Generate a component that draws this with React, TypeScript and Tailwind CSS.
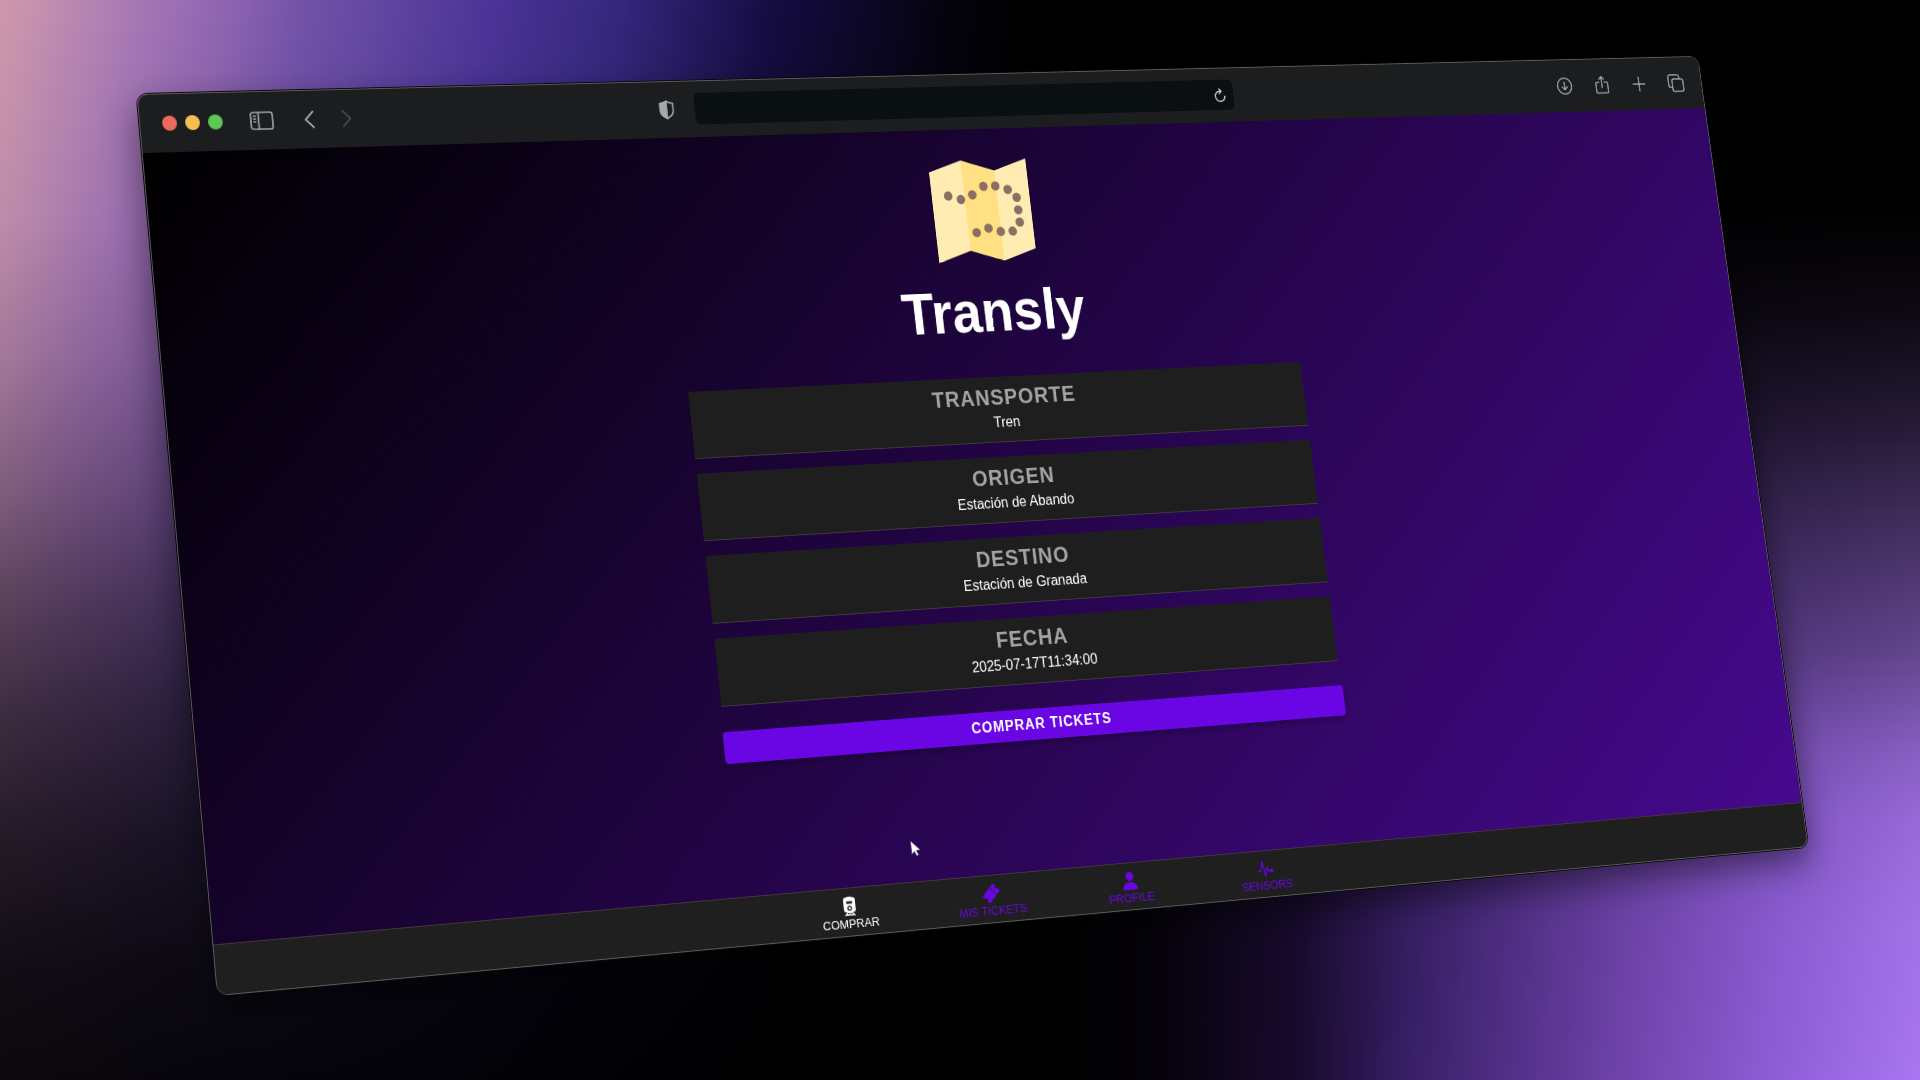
import type { ReactNode } from "react";
import { IoPerson, IoPulse, IoTicket, IoTrain } from "react-icons/io5";

const mapDots: [number, number][] = [
  [10.7, 18.2],
  [15.7, 19.7],
  [20.6, 18.1],
  [25.5, 15],
  [30.4, 15],
  [35.3, 16.5],
  [38.6, 19.6],
  [38.7, 24.3],
  [38.7, 28.9],
  [35.4, 32.2],
  [30.5, 32.2],
  [25.6, 30.8],
  [20.6, 32.3],
];

function MapLogo() {
  return (
    <svg viewBox="0 0 48 48" className="size-36" role="img" aria-label="Transly">
      <path d="M4 9.2 17.33 5v34L4 43.2zM30.67 9.2 44 5v34l-13.33 4.2z" fill="#ffecb3" />
      <path d="M17.33 5l13.34 4.2v34L17.33 39z" fill="#ffe082" />
      {mapDots.map(([x, y]) => (
        <circle key={`${x}-${y}`} cx={x} cy={y} r="1.75" fill="#8d6e63" />
      ))}
    </svg>
  );
}

function ToolIcon({ label, dim, children }: { label: string; dim?: boolean; children: ReactNode }) {
  return (
    <button type="button" aria-label={label} className={dim ? "text-[#46484b]" : "text-[#a5a7aa]"}>
      <svg
        viewBox="0 0 22 22"
        className="size-[22px]"
        fill="none"
        stroke="currentColor"
        strokeWidth="1.6"
        strokeLinecap="round"
        strokeLinejoin="round"
      >
        {children}
      </svg>
    </button>
  );
}

function Toolbar() {
  return (
    <header className="grid h-[62px] grid-cols-[1fr_auto_1fr] items-center bg-[#1b1d1f] px-6 pb-px">
      <div className="flex items-center">
        <div className="flex gap-[9px]">
          <button type="button" aria-label="Close" className="size-4 rounded-full bg-[#ee6a5f]" />
          <button type="button" aria-label="Minimize" className="size-4 rounded-full bg-[#f5bf4f]" />
          <button type="button" aria-label="Maximize" className="size-4 rounded-full bg-[#5fc653]" />
        </div>
        <button type="button" aria-label="Sidebar" className="ml-[30px] text-[#a5a7aa]">
          <svg viewBox="0 0 26 20" className="h-5 w-[26px]" fill="none" stroke="currentColor" strokeWidth="1.7" strokeLinecap="round">
            <rect x="1" y="1" width="24" height="18" rx="2.5" />
            <path d="M9.5 1v18" />
            <path d="M4 5h2.4M4 8h2.4M4 11h2.4" strokeWidth="1.3" />
          </svg>
        </button>
        <div className="ml-[29px] flex gap-[19px]">
          <ToolIcon label="Back">
            <path d="M15 2.5 6.5 11l8.5 8.5" strokeWidth="1.8" />
          </ToolIcon>
          <ToolIcon label="Forward" dim>
            <path d="M7 2.5l8.5 8.5L7 19.5" strokeWidth="1.8" />
          </ToolIcon>
        </div>
      </div>
      <div className="flex w-[664px] items-center">
        <button type="button" aria-label="Privacy report" className="-ml-[43px] text-[#a5a7aa]">
          <svg viewBox="0 0 20 22" className="h-[22px] w-5" fill="none" stroke="currentColor" strokeWidth="1.7">
            <path d="M10 1.5c2.5 1.5 5 2 7.500 2.300V12c0 4-3 6.500-7.500 8.500C5.500 18.500 2.500 16 2.500 12V3.800C5 3.500 7.500 3 10 1.500z" />
            <path d="M10 1.500C7.500 3 5 3.500 2.500 3.800V12c0 4 3 6.500 7.500 8.500z" fill="currentColor" />
          </svg>
        </button>
        <div className="ml-[23px] flex h-[35px] w-full shrink-0 items-center rounded-md bg-[#0a0f11] pr-2">
          <input aria-label="Address" className="h-full min-w-0 flex-1 bg-transparent px-3 text-sm text-gray-200 outline-none" />
          <button type="button" aria-label="Reload" className="text-[#d8dadb]">
            <svg viewBox="0 0 18 18" className="size-[18px]" fill="none" stroke="currentColor" strokeWidth="1.5" strokeLinecap="round" strokeLinejoin="round">
              <path d="M10.5 4.300H9a6 6 0 1 0 6 6" />
              <path d="M8.300 1.700 11 4.300 8.300 7" />
            </svg>
          </button>
        </div>
      </div>
      <div className="flex justify-end gap-[29px]">
        <ToolIcon label="Downloads">
          <circle cx="11" cy="11" r="9.5" />
          <path d="M11 6.500v9M7.500 12l3.500 3.500 3.500-3.500" />
        </ToolIcon>
        <ToolIcon label="Share">
          <path d="M7.500 7.500H4.500a1.500 1.500 0 0 0-1.500 1.500v10a1.500 1.500 0 0 0 1.500 1.500h13a1.500 1.500 0 0 0 1.500-1.500V9a1.500 1.500 0 0 0-1.500-1.500h-3M11 14V1M7.800 4 11 .9 14.200 4" />
        </ToolIcon>
        <ToolIcon label="New tab">
          <path d="M11 3v16M3 11h16" />
        </ToolIcon>
        <ToolIcon label="Tab overview">
          <rect x="6" y="6" width="15" height="15" rx="2.5" />
          <path d="M6 16H3.500A2.500 2.500 0 0 1 1 13.500v-10A2.500 2.500 0 0 1 3.500 1h10A2.500 2.500 0 0 1 16 3.500V6" />
        </ToolIcon>
      </div>
    </header>
  );
}

const trip = [
  { label: "TRANSPORTE", value: "Tren" },
  { label: "ORIGEN", value: "Estación de Abando" },
  { label: "DESTINO", value: "Estación de Granada" },
  { label: "FECHA", value: "2025-07-17T11:34:00" },
];

const tabs = [
  { label: "COMPRAR", icon: IoTrain, active: true },
  { label: "MIS TICKETS", icon: IoTicket, active: false },
  { label: "PROFILE", icon: IoPerson, active: false },
  { label: "SENSORS", icon: IoPulse, active: false },
];

function Page() {
  return (
    <main className="relative flex flex-col items-center bg-[linear-gradient(135deg,#000_0%,#46098e_100%)] px-6 pt-5 pb-[141px]">
      <MapLogo />
      <h1 className="mt-1.5 text-[64px] leading-[72px] font-bold text-white">Transly</h1>
      <div className="mt-[37px] w-full max-w-[754px]">
        <dl className="flex flex-col gap-4 px-[2px] text-center">
          {trip.map((item) => (
            <div key={item.label} className="border-b border-[#43383f] bg-[#1e1e1e] py-2">
              <dt className="text-2xl leading-[30px] font-bold tracking-[1px] text-[#a3a3a3]">{item.label}</dt>
              <dd className="text-base leading-[26px] text-white">{item.value}</dd>
            </div>
          ))}
        </dl>
        <button
          type="button"
          className="mt-[27px] block h-[34px] w-full rounded bg-[#6a06e4] text-base font-bold tracking-[1px] text-white shadow-md shadow-black/20"
        >
          COMPRAR TICKETS
        </button>
      </div>
      <svg viewBox="0 0 12 18" className="absolute top-[777px] left-[41%] h-[18px] w-3" aria-hidden="true">
        <path d="M.5.5v14.500l3.300-3 2.200 5 2.500-1.100-2.200-4.900h4.700z" fill="#fff" stroke="#1a1026" strokeWidth=".4" />
      </svg>
    </main>
  );
}

function TabBar() {
  return (
    <nav className="flex h-[51px] justify-center border-t border-[#46363c] bg-[#1f1f1f]">
      {tabs.map(({ label, icon: Icon, active }) => (
        <a
          key={label}
          href="#"
          aria-current={active ? "page" : undefined}
          className={
            active
              ? "flex w-[168px] flex-col items-center pt-2 text-[13px] leading-4 text-white"
              : "flex w-[168px] flex-col items-center pt-2 text-[13px] leading-4 text-[#6a06e4]"
          }
        >
          <Icon className="size-[22px]" aria-hidden="true" />
          {label}
        </a>
      ))}
    </nav>
  );
}

function Backdrop() {
  return (
    <div className="absolute inset-0 grid grid-cols-[55%_45%]" aria-hidden="true">
      <div className="bg-[linear-gradient(to_bottom,transparent_0%,rgb(0_0_0/0.03)_20%,rgb(0_0_0/0.14)_33%,rgb(0_0_0/0.3)_45%,rgb(0_0_0/0.48)_55%,rgb(0_0_0/0.63)_65%,rgb(0_0_0/0.79)_78%,rgb(0_0_0/0.89)_90%,rgb(0_0_0/0.93)_100%),linear-gradient(99deg,#cf98aa_0%,#bd8bb1_5%,#a475b5_12%,#9065b1_18%,#7152a8_25%,#4b3497_40%,#33267b_51%,#150c42_63%,#06030f_77%,#000_84%)]" />
      <div className="bg-[linear-gradient(to_bottom,#000_19%,rgb(0_0_0/0.92)_29%,rgb(0_0_0/0.78)_39%,rgb(0_0_0/0.69)_44%,rgb(0_0_0/0.55)_52%,rgb(0_0_0/0.42)_60%,rgb(0_0_0/0.3)_65%,rgb(0_0_0/0.19)_70%,rgb(0_0_0/0.1)_76%,rgb(0_0_0/0.04)_86%,transparent_100%),linear-gradient(to_right,#000_0%,#05020a_11%,#180a2e_28%,#381f66_41%,#533089_53%,#7044ac_66%,#8f5ed8_84%,#a876f0_100%)]" />
    </div>
  );
}

export default function App() {
  return (
    <div className="relative h-screen overflow-hidden bg-black font-['Liberation_Sans',Arial,sans-serif]">
      <Backdrop />
      <div className="relative w-full origin-top-left overflow-hidden rounded-xl border border-[#5c5c5c] shadow-[0_0_0_1px_#08080a,0_16px_40px_rgba(0,0,0,0.5)] [transform:matrix3d(0.932682,-0.015854,0,0.000070318,0.079466,0.933643,0,-0.000030154,0,0,1,0,136.5,94,0,1)]">
        <Toolbar />
        <Page />
        <TabBar />
      </div>
    </div>
  );
}
